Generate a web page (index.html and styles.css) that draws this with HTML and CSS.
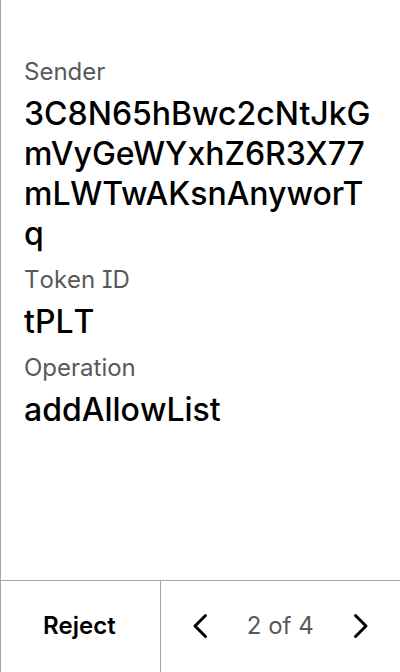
FILE: index.html
```html
<!DOCTYPE html>
<html lang="en">
<head>
<meta charset="utf-8">
<meta name="viewport" content="width=device-width, initial-scale=1">
<title>Review operation</title>
<link rel="stylesheet" href="styles.css">
</head>
<body>
<main class="review">
  <dl class="fields">
    <div class="field">
      <dt class="label">Sender</dt>
      <dd class="value address">3C8N65hBwc2cNtJkGmVyGeWYxhZ6R3X77mLWTwAKsnAnyworTq</dd>
    </div>
    <div class="field">
      <dt class="label">Token ID</dt>
      <dd class="value">tPLT</dd>
    </div>
    <div class="field">
      <dt class="label">Operation</dt>
      <dd class="value">addAllowList</dd>
    </div>
  </dl>
  <footer class="footer">
    <button class="reject" type="button">Reject</button>
    <nav class="pager" aria-label="Pages">
      <button class="step" type="button" aria-label="Previous page">
        <svg class="chevron" viewBox="0 0 40 40" aria-hidden="true"><path d="M24.500 9.500 L14 20 L24.500 30.500"/></svg>
      </button>
      <span class="page">2 of 4</span>
      <button class="step" type="button" aria-label="Next page">
        <svg class="chevron" viewBox="0 0 40 40" aria-hidden="true"><path d="M15.500 9.500 L26 20 L15.500 30.500"/></svg>
      </button>
    </nav>
  </footer>
</main>
</body>
</html>
```
FILE: styles.css
```css
* {
  box-sizing: border-box;
}

body {
  margin: 0;
  background: #fff;
  color: #000;
  font-family: Inter, sans-serif;
  font-kerning: none;
  font-feature-settings: "cv08";
}

.review {
  display: flex;
  flex-direction: column;
  min-height: 100vh;
  border-left: 1px solid #a6a6a6;
}

.fields {
  display: flex;
  flex: 1;
  flex-direction: column;
  gap: 10px;
  margin: 0;
  padding: 56px 24px 24px 23px;
}

.field {
  display: flex;
  flex-direction: column;
  gap: 6px;
}

.label {
  color: #595959;
  font-size: 24px;
  line-height: 32px;
}

.value {
  margin: 0;
  font-size: 32px;
  font-weight: 500;
  line-height: 40px;
  overflow-wrap: anywhere;
}

.address {
  font-kerning: normal;
}

.footer {
  display: flex;
  height: 92px;
  border-top: 1px solid #a6a6a6;
}

.footer button {
  padding: 0;
  border: 0;
  background: none;
  color: inherit;
  font: inherit;
}

.footer .reject {
  width: 40%;
  padding: 0 2px 2px 0;
  border-right: 1px solid #a6a6a6;
  font-size: 24px;
  font-weight: 600;
}

.pager {
  display: flex;
  flex: 1;
  align-items: center;
  justify-content: space-between;
  padding: 0 20px 2px;
}

.step {
  display: flex;
}

.chevron {
  width: 40px;
  height: 40px;
  fill: none;
  stroke: #000;
  stroke-width: 3;
  stroke-linecap: round;
  stroke-linejoin: round;
}

.page {
  color: #595959;
  font-size: 24px;
}
```
